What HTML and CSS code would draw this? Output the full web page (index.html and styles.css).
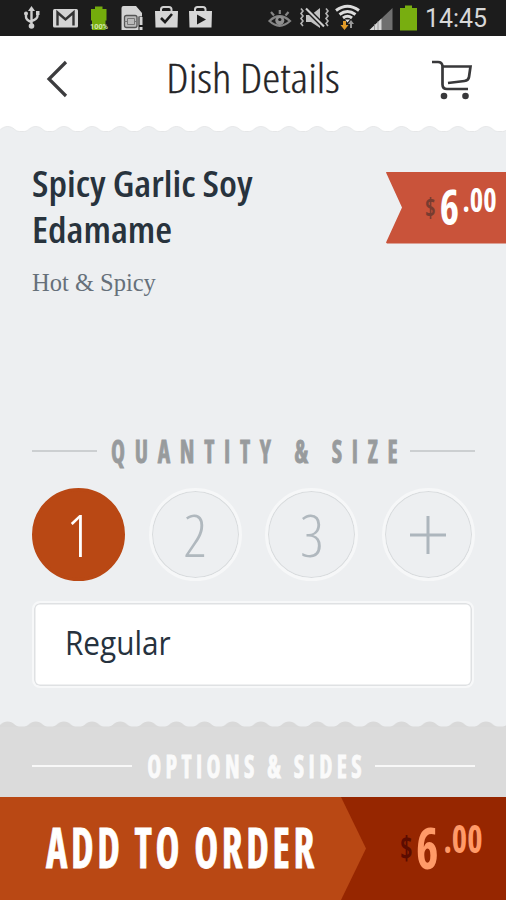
FILE: index.html
```
<!DOCTYPE html>
<html lang="en">
<head>
<meta charset="utf-8">
<title>Dish Details</title>
<link rel="stylesheet" href="styles.css">
</head>
<body>
<div class="status">
  <svg class="status-icons" width="506" height="36" viewBox="0 0 506 36">
    <g fill="none" stroke="#cfcfcf" stroke-width="2.400">
      <path d="M31.500 10V26M26 13v4q0 3 5.500 5M37.500 13v3q0 3-6 5"/>
    </g>
    <path d="M28 11l3.500-5 3.500 5z" fill="#cfcfcf"/>
    <circle cx="31.500" cy="26" r="2.800" fill="#cfcfcf"/>
    <circle cx="26" cy="13.500" r="2" fill="#cfcfcf"/>
    <rect x="36" y="11" width="3.500" height="4" fill="#cfcfcf"/>
    <rect x="53" y="9" width="25" height="18.500" rx="1.500" fill="#d4d4d4"/>
    <path d="M57.500 25.500V12.500L65.500 19.500 73.500 12.500V25.500" fill="none" stroke="#333" stroke-width="2.400"/>
    <path d="M91 9h4V6.500h7.500V9h4v11.500h-1V30H92v-9.500h-1z" fill="#74ac0c"/>
    <text x="90" y="28.500" class="pct" textLength="18" lengthAdjust="spacingAndGlyphs">100%</text>
    <path d="M123.500 6H136l6 7v3.500h-3.500V30h-17V8q0-2 2-2z" fill="#d4d4d4"/>
    <rect x="124.500" y="15.500" width="12.500" height="12" rx="2" fill="#bbb" stroke="#555" stroke-width="1.300"/>
    <path d="M127.500 18.500h7v6h-7zM124.500 21.500h3M134 21.500h3" fill="none" stroke="#777"/>
    <path d="M139.500 17h3v8h-3zM139.500 27h3v3h-3z" fill="#d4d4d4"/>
    <path d="M161 12V9.500q0-2.500 2.500-2.500h5.500q2.500 0 2.500 2.500V12M195 12V9.500q0-2.500 2.500-2.500h5.500q2.500 0 2.500 2.500V12" fill="none" stroke="#d0d0d0" stroke-width="2"/>
    <path d="M155 11h23l-.5 16.500h-22zM189 11h23l-.5 16.500h-22z" fill="#d6d6d6"/>
    <path d="M161 18l4 4 7-8" fill="none" stroke="#1c1c1c" stroke-width="2.600"/>
    <path d="M197 14.500l9 5-9 5z" fill="#1c1c1c"/>
    <g fill="none" stroke="#858585" stroke-width="2.200">
      <path d="M269.500 21q10-9.500 20.500 0-10.500 9.500-20.500 0zM271 12l3 3.500M279.800 10v4M288.500 12l-3 3.500"/>
    </g>
    <circle cx="279.800" cy="20.500" r="4.500" fill="#8f8f8f"/><circle cx="279.800" cy="19.500" r="1.600" fill="#1c1c1c"/>
    <path d="M306 15h5l9-7v20l-9-6h-5z" fill="#c2c2c2"/>
    <path d="M301 8.500l2 2.500-2 2.500 2 2.500-2 2.500 2 2.500-2 2.500 2 2.500M326 8.500l2 2.500-2 2.500 2 2.500-2 2.500 2 2.500-2 2.500 2 2.500" fill="none" stroke="#b5b5b5" stroke-width="1.600"/>
    <path d="M306 8.500L324 26.500" stroke="#1c1c1c" stroke-width="5"/>
    <path d="M306 8.500L324 26.500" stroke="#cfcfcf" stroke-width="2.200"/>
    <g fill="none" stroke="#dcdcdc" stroke-width="3">
      <path d="M336 10.500q11.500-8.500 23 0M339.500 14.500q8-6 16 0M343 18q4.500-3.500 9 0"/>
    </g>
    <path d="M345 19.500h5l-2.500 3z" fill="#dcdcdc"/>
    <path d="M343 21h3v4h2.500l-4 5-4-5h2.500z" fill="#e09a28"/>
    <path d="M350 28v-4H348l3-4 3 4h-2v4z" fill="#9a9a9a"/>
    <path d="M369.500 30L392.500 8v22z" fill="#6f6f6f"/>
    <path d="M369.500 30L381.500 18.500V30z" fill="#d6d6d6"/><path d="M374.500 24v6M378 21v9" stroke="#888" stroke-width=".8"/>
    <path d="M400 8h5V5.500h7V8h5v22.500h-17z" fill="#78ae10"/>
    <text x="425" y="26.500" class="clock" textLength="62" lengthAdjust="spacingAndGlyphs">14:45</text>
  </svg>
</div>

<header class="header">
  <svg class="back" width="24" height="38" viewBox="0 0 24 38"><path d="M20 2L3 19 20 36" fill="none" stroke="#3c3c3e" stroke-width="3.200"/></svg>
  <h1 class="title">Dish Details</h1>
  <svg class="cart" width="42" height="42" viewBox="0 0 42 42">
    <g fill="none" stroke="#38383a" stroke-width="2.700">
      <path d="M1 3H7Q11 3 11.500 7V25.500Q11.500 30 16 30H37"/>
      <path d="M11 7.500H39.500L38 18Q37.500 21.500 33.500 22L17 24"/>
    </g>
    <circle cx="13" cy="37" r="3.300" fill="#38383a"/><circle cx="34.500" cy="37" r="3.300" fill="#38383a"/>
  </svg>
</header>
<svg class="edge" width="506" height="6" viewBox="0 0 506 6">
  <defs>
    <pattern id="wave" x="-6.370" width="28.140" height="6" patternUnits="userSpaceOnUse">
      <path d="M0 5.500H2.500C6.500 5.500 8 .5 14 .5S21.500 5.500 25.500 5.500H28.200V8H0z" fill="#edeff1" stroke="#e2e4e5" stroke-width=".8"/>
    </pattern>
  </defs>
  <rect width="506" height="6" fill="#fff"/><rect width="506" height="6" fill="url(#wave)"/>
</svg>

<main class="main">
  <section class="dish">
    <div class="dish-text">
      <h2 class="name">Spicy Garlic Soy<br>Edamame</h2>
      <p class="desc">Hot &amp; Spicy</p>
    </div>
    <div class="flag"><div class="price"><span class="cur">$</span><span class="whole">6</span><span class="cents"><i>.</i>00</span></div></div>
  </section>

  <div class="heading"><span class="rule"></span><span class="label">QUANTITY &amp; SIZE</span><span class="rule"></span></div>

  <div class="quantity">
    <button class="qty selected">1</button>
    <button class="qty">2</button>
    <button class="qty">3</button>
    <button class="qty"><svg width="36" height="38" viewBox="0 0 36 38"><path d="M0 19H36M18 0V38" stroke="#adb6bd" stroke-width="3"/></svg></button>
  </div>

  <div class="select"><span class="select-value">Regular</span></div>
</main>

<svg class="edge" width="506" height="6" viewBox="0 0 506 6">
  <defs>
    <pattern id="wave2" x="-6.370" width="28.140" height="6" patternUnits="userSpaceOnUse">
      <path d="M0 5.500H2.500C6.500 5.500 8 .5 14 .5S21.500 5.500 25.500 5.500H28.200V8H0z" fill="#d9d9d9"/>
    </pattern>
  </defs>
  <rect width="506" height="6" fill="#edeff1"/><rect width="506" height="6" fill="url(#wave2)"/>
</svg>
<section class="options">
  <div class="heading light"><span class="rule"></span><span class="label">OPTIONS &amp; SIDES</span><span class="rule"></span></div>
</section>

<footer class="footer">
  <div class="add"><span class="add-label">ADD TO ORDER</span></div>
  <div class="total"><div class="price"><span class="cur">$</span><span class="whole">6</span><span class="cents"><i>.</i>00</span></div></div>
</footer>
</body>
</html>
```
FILE: styles.css
```
* { box-sizing: border-box; }
body {
  margin: 0;
  width: 506px;
  height: 900px;
  overflow: hidden;
  display: flex;
  flex-direction: column;
  background: #edeff1;
  font-family: "Open Sans", sans-serif;
}
body > * { flex: none; }
svg { display: block; flex: none; }
h1, h2, p { margin: 0; }

.status { height: 36px; background: #1c1c1c; }
.clock { font: 400 25px Roboto, sans-serif; fill: #d8d8d8; }
.pct { font: 700 8px Roboto, sans-serif; fill: #d5e8b0; }

.header {
  height: 90px;
  padding: 0 33px 0 46px;
  display: flex;
  align-items: center;
  justify-content: space-between;
  background: #fff;
}
.back { margin-bottom: 4px; }
.cart { margin-bottom: 2px; }
.title {
  font-size: 40px;
  font-weight: 300;
  font-stretch: 75%;
  line-height: 80px;
  margin: 0 0 6px 6px;
  color: #242426;
  -webkit-text-stroke: .3px #242426;
  white-space: nowrap;
  transform: scaleX(1.14);
}

.main { height: 589px; display: flex; flex-direction: column; }
.dish { flex: none; height: 299px; padding: 28px 0 0 32px; display: flex; justify-content: space-between; align-items: flex-start; }
.name {
  font-size: 35.500px;
  font-weight: 600;
  font-stretch: 75%;
  line-height: 46px;
  color: #28333d;
  transform: scaleX(1.09);
  transform-origin: left;
}
.desc {
  margin-top: 16px;
  font: 24.500px/30px "Liberation Serif", serif;
  color: #66707a;
}
.flag {
  width: 120px;
  height: 72px;
  margin-top: 11.500px;
  padding-left: 39px;
  background: #c9533a;
  clip-path: polygon(0 1px, 1px 0, 100% 0, 100% 100%, 1px 100%, 0 71px, 16px 50%);
}

.price {
  display: flex;
  align-items: baseline;
  width: max-content;
  font-weight: 700;
  font-stretch: 75%;
  transform: scaleX(.84);
  transform-origin: left;
}
.cur { font-size: 27px; }
.cents i { font-style: normal; }
.flag .price { line-height: 69px; color: #fff; }
.flag .cur { color: #773c30; position: relative; top: -8px; }
.flag .whole { font-size: 49px; margin-left: 5px; }
.flag .cents { font-size: 34px; position: relative; top: -13px; margin-left: 4px; }

.heading {
  height: 40px;
  padding: 0 31px 0 32px;
  display: flex;
  align-items: center;
  justify-content: space-between;
}
.rule { flex: none; width: 65px; height: 2px; background: #cccfd1; }
.label {
  flex: 1 1 0;
  min-width: 0;
  display: flex;
  justify-content: center;
  white-space: nowrap;
  font-size: 31.500px;
  font-weight: 700;
  font-stretch: 75%;
  line-height: 38px;
  letter-spacing: 12.900px;
  text-indent: 15px;
  color: #989b9d;
  -webkit-text-stroke: .8px #989b9d;
  transform: scaleX(.75);
}
.quantity { margin-top: 17px; padding: 0 31px 0 32px; display: flex; justify-content: space-between; }
.qty {
  width: 93px;
  height: 93px;
  padding: 0;
  display: flex;
  align-items: center;
  justify-content: center;
  border: 3px solid #f6f7f8;
  border-radius: 50%;
  background: #edeff1;
  box-shadow: inset 0 0 0 1px #d8dbdd;
  font: 300 58px/80px "Open Sans", sans-serif;
  font-stretch: 75%;
  color: #b0b8be;
}
.selected { border-color: #b94814; background: #b94814; box-shadow: none; color: #fff; }
.select {
  height: 87px;
  margin: 20px 32px 0 32px;
  padding: 0 31px;
  border: 2px solid #f7f8f9;
  border-radius: 8px;
  background: #fff;
  box-shadow: inset 0 0 0 1.500px #dfe1e3;
}
.select-value {
  display: block;
  width: max-content;
  font-size: 32px;
  line-height: 80px;
  color: #26323e;
  transform: scaleX(.93);
  transform-origin: left;
}

.options { height: 70px; padding-top: 19px; background: #dbdbdb; }
.light .rule { width: 100px; background: #f8f8f8; }
.light .label { color: #fafafa; -webkit-text-stroke-color: #fafafa; letter-spacing: 5.800px; text-indent: 8px; }

.footer { height: 103px; display: flex; background: #962600; }
.add {
  width: 366px;
  padding-left: 46px;
  background: #b94814;
  clip-path: polygon(0 0, 341px 0, 366px 50%, 341px 100%, 0 100%);
}
.add-label {
  display: block;
  width: max-content;
  font-size: 56px;
  font-weight: 700;
  font-stretch: 75%;
  line-height: 98px;
  letter-spacing: 5px;
  color: #fff;
  -webkit-text-stroke: .8px #fff;
  transform: scaleX(.725);
  transform-origin: left;
}
.total { padding-left: 34px; }
.total .price { line-height: 101px; color: #ff9a68; }
.total .cur { font-size: 32px; color: #5c0c00; position: relative; top: -9px; }
.total .whole { font-size: 57px; margin-left: 4px; }
.total .cents { font-size: 39px; position: relative; top: -16px; margin-left: 6px; }
```
